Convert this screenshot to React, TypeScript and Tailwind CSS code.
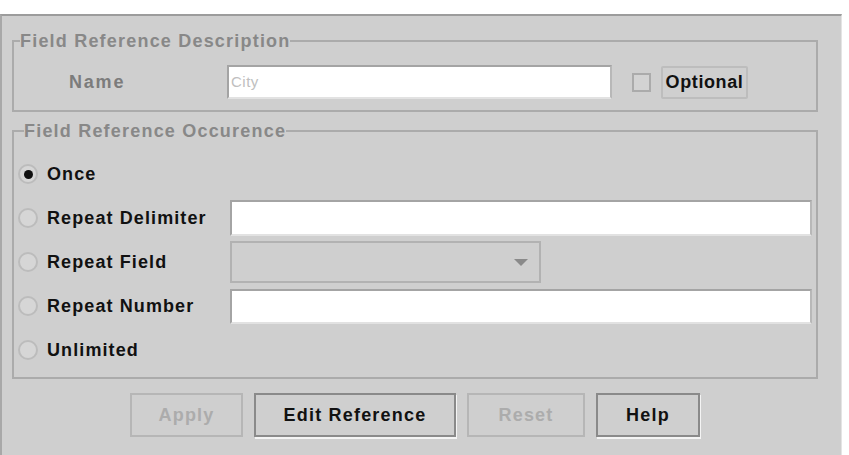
import React from 'react';

const font = { fontFamily: '"Liberation Sans", Arial, sans-serif' };

type RadioRowProps = {
  label: string;
  checked?: boolean;
  children?: React.ReactNode;
};

const Radio: React.FC<{ checked?: boolean }> = ({ checked }) => (
  <span className="w-[20px] h-[20px] rounded-full border-2 border-[#bcbcbc] bg-[#d6d6d6] flex items-center justify-center shrink-0">
    {checked && <span className="w-[9px] h-[9px] rounded-full bg-[#111]" />}
  </span>
);

const RadioRow: React.FC<RadioRowProps> = ({ label, checked, children }) => (
  <div className="h-[44px] flex items-center">
    <div className="w-[212px] flex items-center gap-[9px] shrink-0">
      <Radio checked={checked} />
      <span className="text-[18px] font-bold text-[#111] tracking-[1.1px]">{label}</span>
    </div>
    {children}
  </div>
);

const TextBox: React.FC<{ className?: string; value?: string }> = ({ className = '', value }) => (
  <div
    className={`bg-white border-2 border-t-[#a4a4a4] border-l-[#a4a4a4] border-b-[#e2e2e2] border-r-[#b8b8b8] flex items-center px-[2px] ${className}`}
  >
    {value && <span className="text-[15px] text-[#c0c0c0] tracking-[0.5px]">{value}</span>}
  </div>
);

const Button: React.FC<{ label: string; width: string; disabled?: boolean }> = ({ label, width, disabled }) => (
  <button
    className={`${width} h-[44px] bg-[#cfcfcf] border-2 text-[18px] font-bold tracking-[1.2px] ${
      disabled
        ? 'border-[#b6b6b6] text-[#acacac]'
        : 'border-[#8a8a8a] text-[#111] shadow-[1px_2px_0_#f4f4f4]'
    }`}
  >
    {label}
  </button>
);

export default function App() {
  return (
    <div className="w-[849px] h-[455px] bg-white pt-[14px] overflow-hidden" style={font}>
      <div className="w-[842px] h-[441px] bg-[#cfcfcf] border-t-2 border-l-2 border-r border-t-[#9c9c9c] border-l-[#a8a8a8] border-r-[#e4e4e4] pl-[10px] pr-[23px]">
        {/* description group */}
        <fieldset className="mt-[15px] border-2 border-[#ababab] pb-[11px]">
          <legend className="ml-[6px] text-[18px] leading-[20px] font-bold text-[#888] tracking-[1.2px]">
            Field Reference Description
          </legend>
          <div className="flex items-center pt-[14px]">
            <span className="pl-[55px] w-[213px] text-[18px] font-bold text-[#7c7c7c] tracking-[1.8px]">Name</span>
            <TextBox className="w-[385px] h-[34px]" value="City" />
            <span className="ml-[20px] w-[19px] h-[19px] border-2 border-[#ababab] bg-[#d3d3d3]" />
            <span className="ml-[10px] w-[87px] h-[33px] border-2 border-[#bdbdbd] rounded-[2px] flex items-center justify-center text-[18px] font-bold text-[#111] tracking-[0.6px]">
              Optional
            </span>
          </div>
        </fieldset>

        {/* occurrence group */}
        <fieldset className="mt-[9px] border-2 border-[#ababab] pt-[11px] pb-[5px] pl-[4px] pr-[4px]">
          <legend className="ml-[6px] text-[18px] leading-[20px] font-bold text-[#888] tracking-[1.2px]">
            Field Reference Occurence
          </legend>
          <RadioRow label="Once" checked />
          <RadioRow label="Repeat Delimiter">
            <TextBox className="flex-1 h-[36px]" />
          </RadioRow>
          <RadioRow label="Repeat Field">
            <div className="w-[311px] h-[42px] border-2 border-[#b2b2b2] bg-[#cfcfcf] flex items-center justify-end pr-[11px]">
              <svg width="14" height="9" viewBox="0 0 14 9">
                <path d="M0 1h14L7 8z" fill="#8a8a8a" />
              </svg>
            </div>
          </RadioRow>
          <RadioRow label="Repeat Number">
            <TextBox className="flex-1 h-[35px]" />
          </RadioRow>
          <RadioRow label="Unlimited" />
        </fieldset>

        {/* action buttons */}
        <div className="mt-[14px] flex justify-center gap-[11px]">
          <Button label="Apply" width="w-[113px]" disabled />
          <Button label="Edit Reference" width="w-[202px]" />
          <Button label="Reset" width="w-[118px]" disabled />
          <Button label="Help" width="w-[104px]" />
        </div>
      </div>
    </div>
  );
}
